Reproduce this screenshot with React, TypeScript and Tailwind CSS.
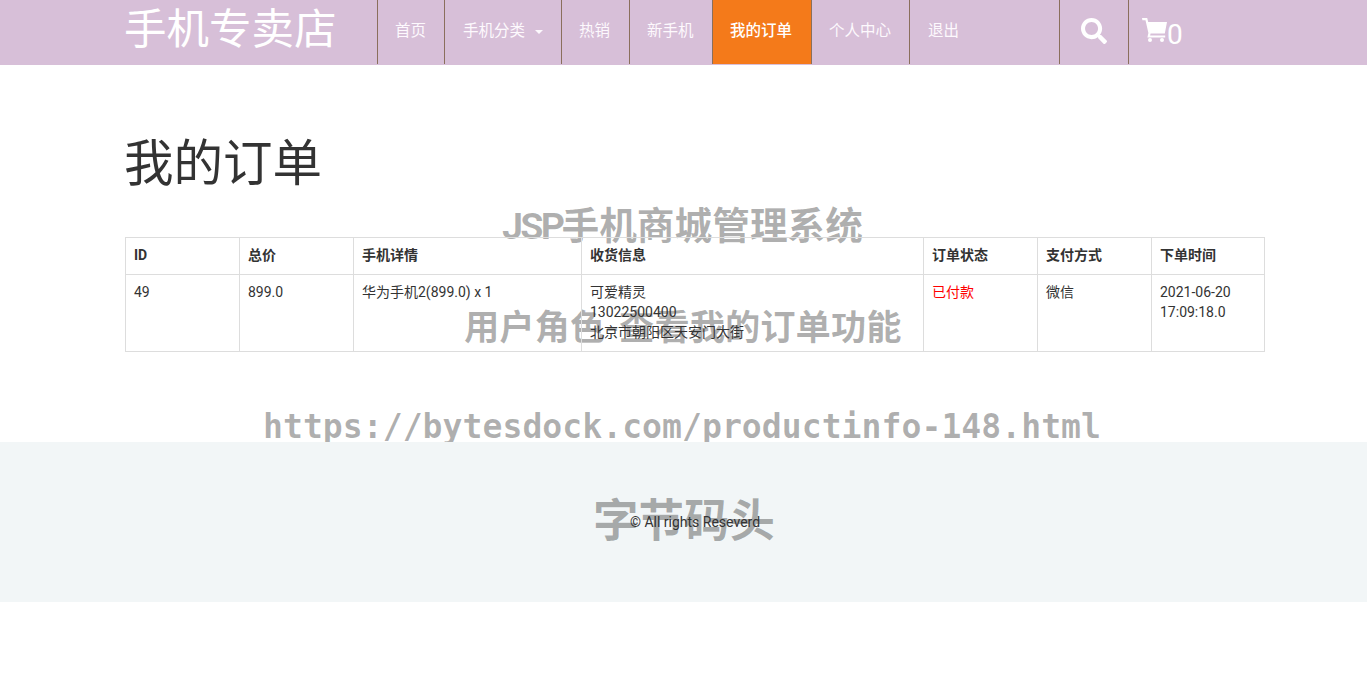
import { FaSearch } from "react-icons/fa";

const items = [
  { label: "首页", w: "w-[67px]", pad: "pl-[17px]" },
  { label: "手机分类", w: "w-[117px]", pad: "pl-[18px]", caret: true },
  { label: "热销", w: "w-[68px]", pad: "pl-[17px]" },
  { label: "新手机", w: "w-[83px]", pad: "pl-[17px]" },
  { label: "我的订单", w: "w-[99px]", pad: "pl-[17px]", active: true },
  { label: "个人中心", w: "w-[98px]", pad: "pl-[17px]" },
  { label: "退出", w: "w-[150px]", pad: "pl-[18px]" },
];

const cols = ["w-[114px]", "w-[114px]", "w-[228px]", "w-[342px]", "w-[114px]", "w-[114px]", "w-[113px]"];
const heads = ["ID", "总价", "手机详情", "收货信息", "订单状态", "支付方式", "下单时间"];
const cell = "border border-[#dddddd] pt-[7px] pr-2 pb-[9px] pl-2 align-top";

function Cart() {
  return (
    <svg viewBox="0 0 25 24" className="mb-[4px] h-[24px] w-[25px]" fill="currentColor">
      <path d="M0 0H5.2L6.2 4H25L22.8 15.5H8.6L8.1 17.5H23.2V19.5H5.4L6.4 15L3.5 2.2H0.4Z" />
      <circle cx="8" cy="22" r="2" />
      <circle cx="20" cy="22" r="2" />
    </svg>
  );
}

export default function App() {
  return (
    <div className="min-h-[700px] bg-white font-['Roboto','Noto_Sans_CJK_SC',sans-serif] text-sm leading-5 text-[#333333]">
      <header className="flex h-[65px] items-stretch bg-[#d7bfd8] pl-[125px]">
        <div className="-ml-[1px] w-[253px] pt-[4px] text-[42.5px] leading-[52px] text-white">手机专卖店</div>
        <nav className="flex h-[64px]">
          {items.map((it) => (
            <a
              key={it.label}
              className={`flex ${it.w} ${it.pad} items-center gap-2 border-l border-[#8a6f5c] pb-[3px] text-[15.5px] ${
                it.active ? "bg-[#f47a1a] font-medium text-white" : "text-[#fdf9fd]"
              }`}
            >
              {it.label}
              {it.caret && (
                <span className="mt-[2px] ml-[2px] h-0 w-0 border-x-[4px] border-t-[4px] border-x-transparent border-t-[#fdf9fd]" />
              )}
            </a>
          ))}
          <a className="flex w-[69px] items-center justify-center border-l border-[#8a6f5c] pb-[2px] text-white">
            <FaSearch className="text-[26px]" />
          </a>
          <a className="flex items-center border-l border-[#8a6f5c] pl-[13px] text-white">
            <Cart />
            <span className="mt-[5px] text-[28px] leading-8">0</span>
          </a>
        </nav>
      </header>

      <main className="relative h-[377px] overflow-hidden">
        <div className="relative z-10 px-[125px]">
          <h1 className="-ml-[1px] pt-[66px] text-[49.5px] leading-[66px] font-normal">我的订单</h1>
          <table className="mt-[40px] w-[1139px] table-fixed border-collapse">
            <colgroup>
              {cols.map((c, i) => (
                <col key={i} className={c} />
              ))}
            </colgroup>
            <thead>
              <tr>
                {heads.map((h) => (
                  <th key={h} className={`${cell} text-left font-bold`}>
                    {h}
                  </th>
                ))}
              </tr>
            </thead>
            <tbody>
              <tr>
                <td className={cell}>49</td>
                <td className={cell}>899.0</td>
                <td className={cell}>华为手机2(899.0) x 1</td>
                <td className={cell}>
                  可爱精灵
                  <br />
                  13022500400
                  <br />
                  北京市朝阳区天安门大街
                </td>
                <td className={`${cell} text-[#ff0000]`}>已付款</td>
                <td className={cell}>微信</td>
                <td className={cell}>
                  2021-06-20
                  <br />
                  17:09:18.0
                </td>
              </tr>
            </tbody>
          </table>
        </div>
        <div className="absolute top-[137px] left-[502px] text-[37.7px] leading-[48px] font-bold whitespace-nowrap text-[rgba(0,0,0,0.31)]">
          <span className="tracking-[-2.7px]">JSP</span>
          <span className="-ml-[1px]">手机商城管理系统</span>
        </div>
        <div className="absolute top-[239px] left-[464px] text-[35.3px] leading-[48px] font-bold whitespace-nowrap text-[rgba(0,0,0,0.31)]">
          用户角色-查看我的订单功能
        </div>
        <div className="absolute top-[338px] left-[263px] font-['DejaVu_Sans_Mono',monospace] text-[33.15px] leading-[48px] font-bold whitespace-nowrap text-[rgba(0,0,0,0.31)]">
          https://bytesdock.com/productinfo-148.html
        </div>
      </main>

      <footer className="relative flex h-[160px] items-center justify-center bg-[#f2f6f7] pl-[23px] text-sm">
        <span className="relative z-10 font-['Roboto',sans-serif]">© All rights Reseverd</span>
        <div className="absolute top-[51px] left-[593px] text-[45.5px] leading-[58px] font-bold whitespace-nowrap text-[rgba(0,0,0,0.31)]">
          字节码头
        </div>
      </footer>
    </div>
  );
}
